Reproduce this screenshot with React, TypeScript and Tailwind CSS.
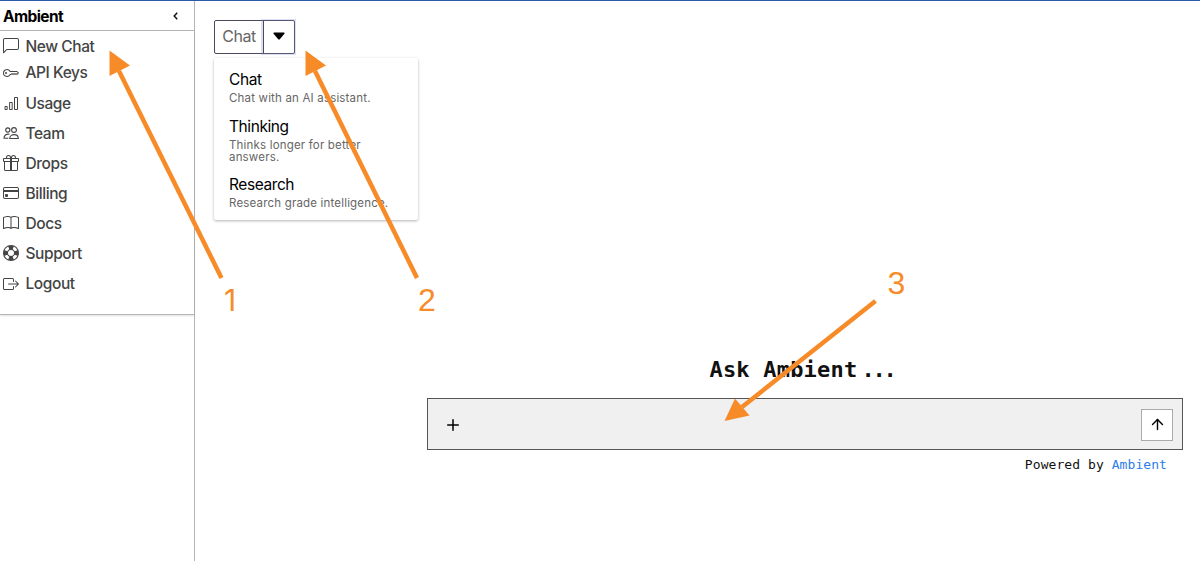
import type { ReactNode } from 'react';
import { BsBook, BsBoxArrowRight, BsChatLeft, BsCreditCard, BsGift, BsKey, BsLifePreserver } from 'react-icons/bs';
import { LuArrowUp, LuPlus } from 'react-icons/lu';

const sans = "font-['Inter','Liberation_Sans',sans-serif]";
const mono = "font-['DejaVu_Sans_Mono','Liberation_Mono',monospace]";

function BarsIcon() {
  return (
    <svg width="16" height="16" viewBox="0 0 16 16" fill="none" stroke="currentColor">
      <path d="M2 11.500h2.200v3H2zM6.600 7.500h2.600v7H6.600zM11.500 2.500h3v12h-3z" />
    </svg>
  );
}

function PeopleIcon() {
  return (
    <svg width="16" height="16" viewBox="0 0 16 16" fill="none" stroke="currentColor" strokeWidth="1.1">
      <circle cx="4.800" cy="5" r="2.100" />
      <circle cx="11" cy="5" r="2.400" />
      <path d="M6.500 9.300C3.200 8.600 1 10.500 1 13.200h4.300M6.700 13.500c0-5.200 8.600-5.200 8.600 0z" />
    </svg>
  );
}

const navItems: { label: string; icon: ReactNode }[] = [
  { label: 'New Chat', icon: <BsChatLeft size={16} /> },
  { label: 'API Keys', icon: <BsKey size={16} /> },
  { label: 'Usage', icon: <BarsIcon /> },
  { label: 'Team', icon: <PeopleIcon /> },
  { label: 'Drops', icon: <BsGift size={16} /> },
  { label: 'Billing', icon: <BsCreditCard size={16} /> },
  { label: 'Docs', icon: <BsBook size={16} /> },
  { label: 'Support', icon: <BsLifePreserver size={16} /> },
  { label: 'Logout', icon: <BsBoxArrowRight size={16} /> },
];

const modes = [
  { name: 'Chat', description: 'Chat with an AI assistant.' },
  { name: 'Thinking', description: 'Thinks longer for better answers.' },
  { name: 'Research', description: 'Research grade intelligence.' },
];

function Sidebar() {
  return (
    <aside className="h-full w-[195px] shrink-0 border-r border-[#b5b5b5]">
      <div className="flex h-[30px] items-center justify-between border-b border-[#b5b5b5] pr-4 pl-[3px]">
        <span className="pt-[2px] text-[15.5px] font-bold tracking-[-0.6px] text-black">Ambient</span>
        <svg width="5" height="8" viewBox="0 0 5 8" fill="none" stroke="#111" strokeWidth="1.5">
          <path d="M4.2 0.7 1.2 4l3 3.3" />
        </svg>
      </div>
      <nav className="h-[284px] border-b border-[#b5b5b5] shadow-[0_1px_2px_rgba(0,0,0,0.12)]">
        {navItems.map(({ label, icon }, i) => (
          <a key={label} className={`flex items-center gap-[7px] pl-[2.5px] text-[15.5px] font-medium tracking-[-0.42px] text-[#444] ${i === 0 ? 'h-[26.5px] pt-1' : 'h-[30.15px]'}`}>
            <span className="shrink-0">{icon}</span>
            <span className="pt-px">{label}</span>
          </a>
        ))}
      </nav>
    </aside>
  );
}

function ModePicker() {
  return (
    <div className="w-[204px]">
      <div className="flex h-[34px] w-[81px] rounded-[2px] border border-[#4a4a5c]">
        <span className="flex w-[48px] items-center justify-center pb-[2px] text-[16px] tracking-[-0.5px] text-[#666]">Chat</span>
        <button className="flex flex-1 items-center justify-center border-l border-[#4a4a5c] pb-[2px] shadow-[0_0_0_2px_rgba(120,130,200,0.25)]">
          <svg width="12" height="8" viewBox="0 0 12 8">
            <path d="M1 0.5h10q1 0.3 0.4 1.2L6.8 7.2q-.8.7-1.6 0L.6 1.7Q0 .8 1 .5z" fill="#000" />
          </svg>
        </button>
      </div>
      <ul className="mt-1 h-[162px] rounded-[2px] bg-white pt-[13px] pr-10 pl-[15px] shadow-[0_1px_3px_rgba(0,0,0,0.3)]">
        {modes.map(({ name, description }) => (
          <li key={name} className="mb-[13.5px]">
            <p className="text-[15.5px] leading-[18px] tracking-[-0.42px] text-black">{name}</p>
            <p className="mt-[3px] w-[165px] text-[11.5px] leading-[12px] tracking-[0.18px] text-[#666]">{description}</p>
          </li>
        ))}
      </ul>
    </div>
  );
}

function Composer() {
  return (
    <section className={`ml-[232px] w-[756px] ${mono}`}>
      <h1 className="flex justify-center pr-[6px] text-[22px] leading-[30px] font-bold tracking-[0.2px] text-[#111]">
        Ask Ambient<span className="ml-1 tracking-[-2.2px]">...</span>
      </h1>
      <div className="mt-[13px] flex h-[52px] items-center justify-between border border-[#555] bg-[#f0f0f0] pt-px pr-[9px] pl-[16px]">
        <LuPlus size={18} className="text-black" />
        <button className="flex size-8 items-center justify-center border border-[#aaa] bg-white">
          <LuArrowUp size={17} className="text-black" />
        </button>
      </div>
      <p className="mt-[6px] pr-4 text-right text-[13px] leading-[18px] tracking-[0.07px] text-[#111]">
        Powered by <a className="text-[#2f7de8]">Ambient</a>
      </p>
    </section>
  );
}

// Numbered callouts drawn over the page
function Annotations() {
  return (
    <svg className="pointer-events-none absolute -top-px left-0" width="1200" height="561" viewBox="0 0 1200 561">
      <g stroke="#f68b28" strokeWidth="4.5">
        <path d="M221.5 278 119 71" />
        <path d="M417 278 315 71" />
        <path d="M875.5 301 742 407" />
      </g>
      <g fill="#f68b28">
        <path d="M109.500 50.500 130 65.500 109.500 76z" />
        <path d="M305.500 50.500 326 65.500 305.500 76z" />
        <path d="M724.500 421 735 398.500 749.500 415.500z" />
      </g>
      <g fill="#f68b28" className="font-['Liberation_Sans',sans-serif] text-[32px]">
        <text x="224" y="311" className="font-['Inter',sans-serif] text-[30px]">1</text>
        <text x="418" y="311">2</text>
        <text x="887.5" y="294">3</text>
      </g>
    </svg>
  );
}

export default function App() {
  return (
    <div className={`relative flex h-[561px] w-[1200px] overflow-hidden border-t border-[#2a5ba8] bg-white ${sans}`}>
      <Sidebar />
      <main className="flex flex-1 flex-col pt-[19px]">
        <div className="h-[335px] pl-[19px]">
          <ModePicker />
        </div>
        <Composer />
      </main>
      <Annotations />
    </div>
  );
}
